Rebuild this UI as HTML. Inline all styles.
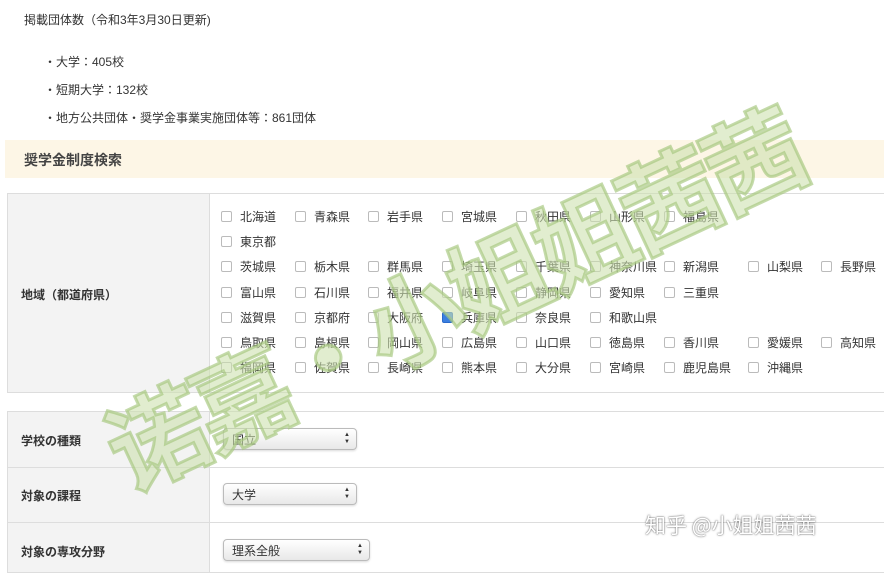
<!DOCTYPE html><html><head><meta charset="utf-8"><style>
body{margin:0;width:884px;height:562px;overflow:hidden;background:#fff;font-family:"Liberation Sans","Noto Sans CJK JP",sans-serif;color:#333;position:relative}
.t{position:absolute;font-size:12px;white-space:nowrap}
.bar{position:absolute;left:5px;top:140px;width:879px;height:38px;background:#fdf6e6}
.bar span{position:absolute;left:19px;top:10px;font-size:14px;font-weight:bold;color:#444}
.tb{position:absolute;left:7px;width:877px;border:1px solid #ddd;background:#fff}
.lc{position:absolute;left:0;top:0;bottom:0;width:201px;background:#f3f3f3;border-right:1px solid #ddd}
.cb{position:absolute;font-size:12px;white-space:nowrap}
.cb i{display:inline-block;width:9px;height:9px;border:1px solid #bbb;border-radius:2px;margin-right:8px;vertical-align:-1px;background:#fff}
.cb i.on{background:#3b7fe0;border-color:#2a6acb}
.lab{position:absolute;left:13px;font-size:12px;font-weight:bold;color:#333}
.sel{position:absolute;left:215px;height:22px;border:1px solid #bbb;border-radius:4px;background:linear-gradient(#fff,#e8e8e8);font-size:12px;line-height:22px;padding-left:8px;box-sizing:border-box;box-shadow:0 1px 2px rgba(0,0,0,.15)}
.rowb{position:absolute;left:0;width:877px;border-top:1px solid #ddd}
.wm{position:absolute;left:75px;top:222px;font-size:100px;font-weight:bold;color:rgba(205,225,175,.6);-webkit-text-stroke:3px rgba(165,198,125,.65);transform:rotate(-25deg);transform-origin:center;white-space:nowrap;letter-spacing:-6px;font-family:"Noto Sans CJK SC",sans-serif}
.zh{position:absolute;left:645px;top:510px;font-size:21px;color:#fff;text-shadow:0 0 2px rgba(0,0,0,.5),0 0 1px rgba(0,0,0,.5);font-family:"Noto Sans CJK SC",sans-serif}
</style></head><body>
<div class="t" style="left:24px;top:11px">掲載団体数（令和3年3月30日更新)</div>
<div class="t" style="left:44px;top:53px">・大学：405校</div>
<div class="t" style="left:44px;top:81px">・短期大学：132校</div>
<div class="t" style="left:44px;top:109px">・地方公共団体・奨学金事業実施団体等：861団体</div>
<div class="bar"><span>奨学金制度検索</span></div>
<div class="tb" style="top:193px;height:198px"><div class="lc"></div><div class="lab" style="top:92px">地域（都道府県）</div></div>
<div id="cbs"></div>
<div class="tb" style="top:411px;height:160px"><div class="lc"></div>
<div class="rowb" style="top:55px"></div><div class="rowb" style="top:110px"></div>
<div class="lab" style="top:20px">学校の種類</div>
<div class="lab" style="top:75px">対象の課程</div>
<div class="lab" style="top:131px">対象の専攻分野</div>
<div class="sel" style="top:16px;width:134px">国立</div>
<div class="sel" style="top:71px;width:134px">大学</div>
<div class="sel" style="top:127px;width:147px">理系全般</div>
</div>
<div class="wm">诺嘉·小姐姐茜茜</div>
<div class="zh">知乎 @小姐姐茜茜</div>
<script>
var rows=[["北海道","青森県","岩手県","宮城県","秋田県","山形県","福島県"],["東京都"],["茨城県","栃木県","群馬県","埼玉県","千葉県","神奈川県","新潟県","山梨県","長野県"],["富山県","石川県","福井県","岐阜県","静岡県","愛知県","三重県"],["滋賀県","京都府","大阪府","兵庫県","奈良県","和歌山県"],["鳥取県","島根県","岡山県","広島県","山口県","徳島県","香川県","愛媛県","高知県"],["福岡県","佐賀県","長崎県","熊本県","大分県","宮崎県","鹿児島県","沖縄県"]];
var xs=[221,295,368,442,516,590,664,748,821],h="";
rows.forEach(function(r,i){r.forEach(function(n,j){h+='<div class="cb" style="left:'+xs[j]+'px;top:'+(208+i*25.2)+'px"><i'+(n=="兵庫県"?' class="on"':'')+'></i>'+n+'</div>';});});
document.getElementById("cbs").innerHTML=h;
document.querySelectorAll(".sel").forEach(function(s){s.innerHTML=s.childNodes[0].textContent+'<b>▲<br>▼</b>';s.querySelector("b").style.cssText="position:absolute;right:6px;top:3px;font-size:6px;line-height:7px";});
</script>
</body></html>
